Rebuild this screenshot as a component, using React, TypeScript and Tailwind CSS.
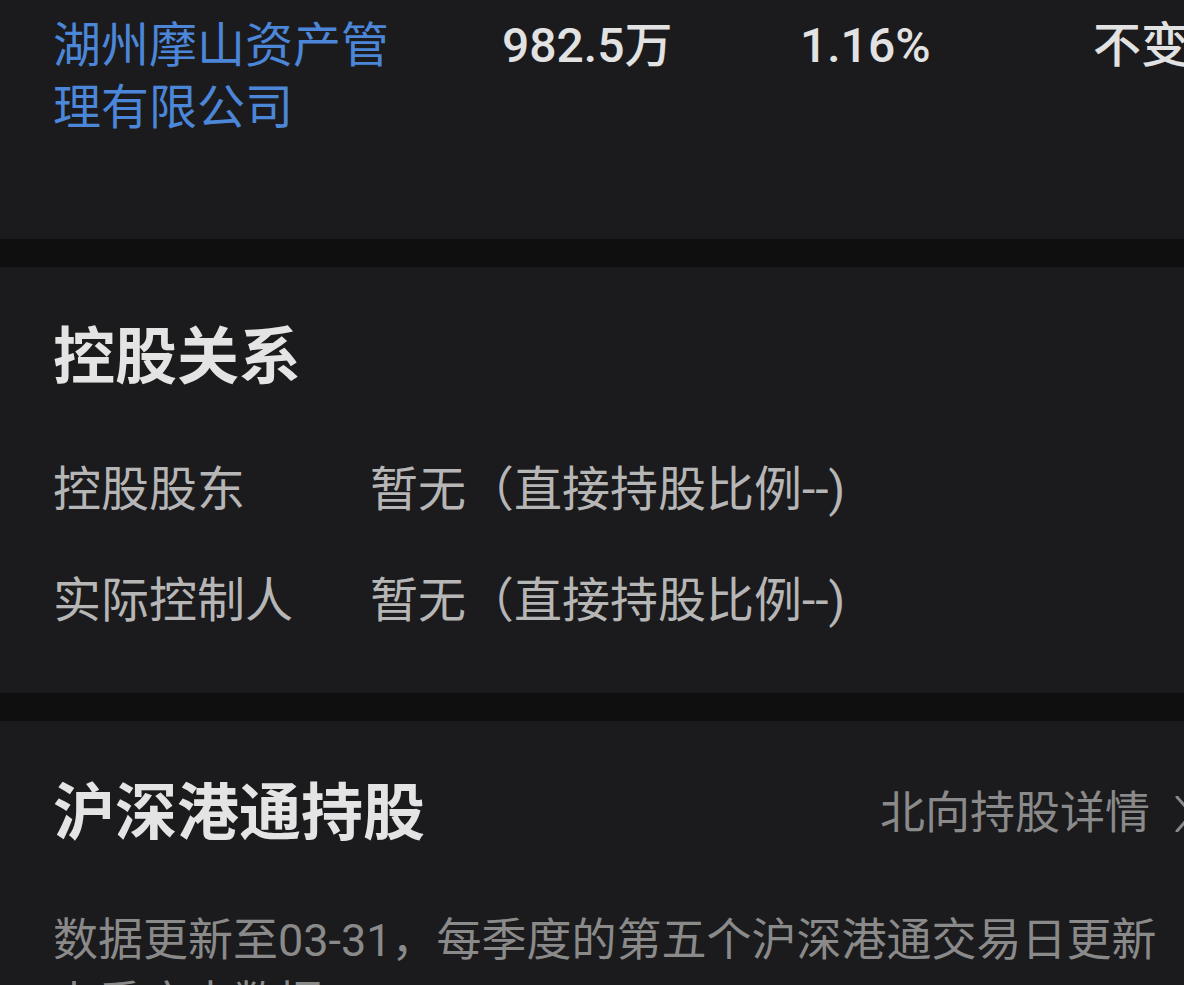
import React from "react";

const font = { fontFamily: 'Roboto, "Noto Sans CJK SC", sans-serif' };

function Chevron() {
  return (
    <svg width="20" height="36" viewBox="0 0 20 36" fill="none" className="shrink-0">
      <path d="M2 1 L17 18 L2 35" stroke="#8a8a8a" strokeWidth="3" strokeLinecap="round" strokeLinejoin="round" />
    </svg>
  );
}

export default function App() {
  return (
    <div className="w-[1184px] h-[985px] overflow-hidden bg-[#1b1b1d]" style={font}>
      <div className="w-[1248px]">
        {/* Top shareholder row */}
        <section className="h-[239px] bg-[#1b1b1d] pl-[53px] pt-[15px]">
          <div className="flex items-start text-[48px] leading-[62px]">
            <div className="w-[449px] text-[#4b86d8]">
              湖州摩山资产管
              <br />
              理有限公司
            </div>
            <div className="w-[298px] font-medium text-[#e2e2e2]">982.5万</div>
            <div className="w-[293px] font-medium text-[#e2e2e2]">1.16%</div>
            <div className="font-medium text-[#e2e2e2]">不变</div>
          </div>
        </section>

        <div className="h-[28px] bg-[#0f0f0f]" />

        {/* 控股关系 */}
        <section className="h-[426px] bg-[#1b1b1d] px-[53px] pt-[60px]">
          <h2 className="text-[62px] leading-[62px] font-bold text-[#e4e4e4]">控股关系</h2>
          <div className="mt-[70px] flex flex-col gap-[49px] text-[48px] leading-[62px] text-[#b6b6b6]">
            <div className="flex">
              <div className="w-[317px]">控股股东</div>
              <div>暂无（直接持股比例--)</div>
            </div>
            <div className="flex">
              <div className="w-[317px]">实际控制人</div>
              <div>暂无（直接持股比例--)</div>
            </div>
          </div>
        </section>

        <div className="h-[28px] bg-[#0f0f0f]" />

        {/* 沪深港通持股 */}
        <section className="bg-[#1b1b1d] px-[53px] pt-[62px] pb-[40px]">
          <div className="flex items-center justify-between">
            <h2 className="text-[62px] leading-[62px] font-bold text-[#e4e4e4]">沪深港通持股</h2>
            <div className="flex items-center gap-[25px] text-[45px] leading-[62px] text-[#8a8a8a]">
              <span>北向持股详情</span>
              <Chevron />
            </div>
          </div>
          <p className="mt-[64px] text-[45px] leading-[63px] text-[#8a8a8a]">
            数据更新至03-31，每季度的第五个沪深港通交易日更新上季度末数据
          </p>
        </section>
      </div>
    </div>
  );
}
